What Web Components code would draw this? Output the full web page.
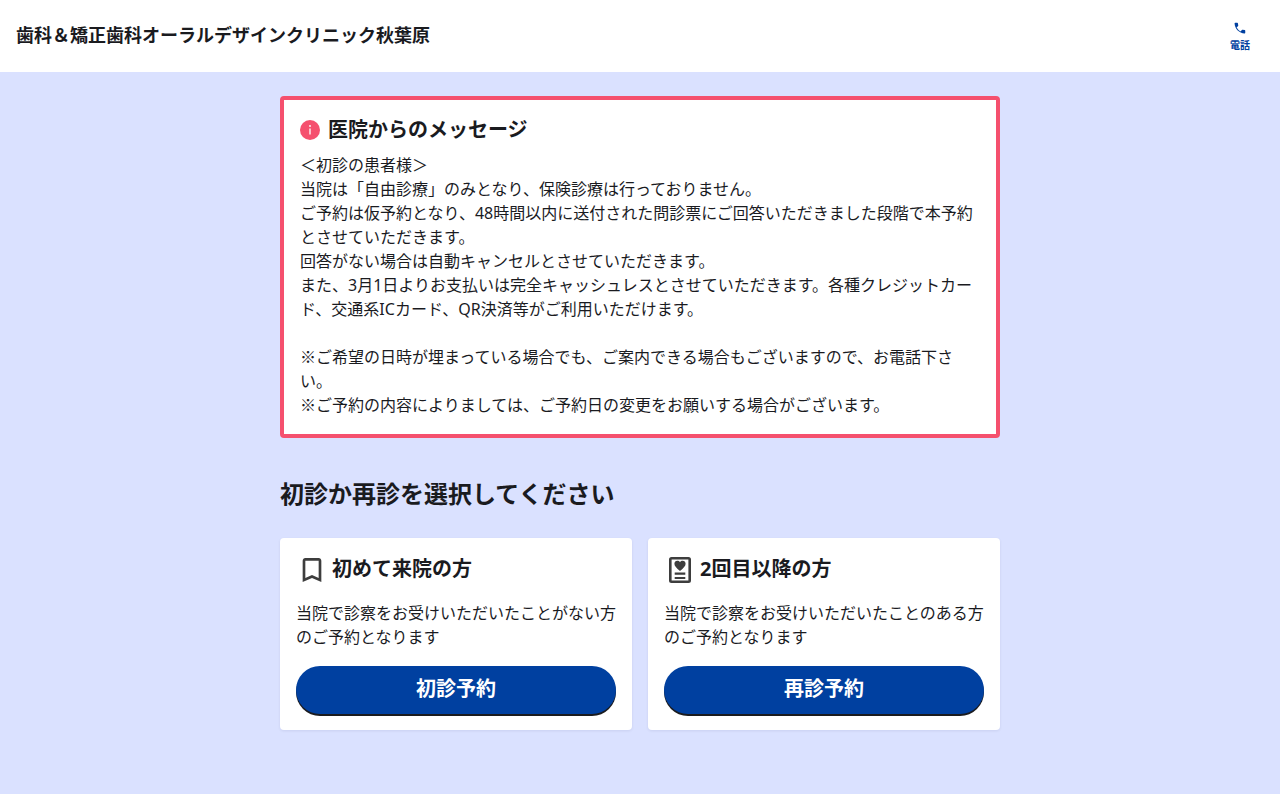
<!DOCTYPE html>
<html lang="ja">
<head>
<meta charset="utf-8">
<meta name="viewport" content="width=device-width, initial-scale=1">
<title>歯科＆矯正歯科オーラルデザインクリニック秋葉原</title>
<style>
  body {
    margin: 0;
    background: #fff;
    color: #1a1b1f;
    font-family: "Noto Sans", "Noto Sans CJK JP", sans-serif;
    font-size: 16px;
    line-height: 24px;
  }
  /* Keeps the reference marks full-width */
  .notes { display: block; margin-top: 24px; font-family: "Open Sans", "Noto Sans CJK JP", sans-serif; }
</style>
</head>
<body>
<clinic-header tel="0300000000">歯科＆矯正歯科オーラルデザインクリニック秋葉原</clinic-header>
<booking-main>
  <clinic-message>
    <span slot="title">医院からのメッセージ</span>＜初診の患者様＞<br>当院は「自由診療」のみとなり、保険診療は行っておりません。<br>ご予約は仮予約となり、48時間以内に送付された問診票にご回答いただきました段階で本予約とさせていただきます。<br>回答がない場合は自動キャンセルとさせていただきます。<br>また、3月1日よりお支払いは完全キャッシュレスとさせていただきます。各種クレジットカード、交通系ICカード、QR決済等がご利用いただけます。<span class="notes">※ご希望の日時が埋まっている場合でも、ご案内できる場合もございますので、お電話下さい。<br>※ご予約の内容によりましては、ご予約日の変更をお願いする場合がございます。</span></clinic-message>
  <visit-choices heading="初診か再診を選択してください">
    <visit-card action="初診予約">
      <svg slot="icon" width="32" height="32" viewBox="0 0 24 24" fill="#3d3d3d" aria-hidden="true"><path d="M17 3H7c-1.100 0-2 .9-2 2v16l7-3 7 3V5c0-1.100-.9-2-2-2zm0 15-5-2.180L7 18V5h10v13z"/></svg>
      <span slot="title">初めて来院の方</span>当院で診察をお受けいただいたことがない方のご予約となります</visit-card>
    <visit-card action="再診予約">
      <svg slot="icon" width="32" height="32" viewBox="0 0 32 32" aria-hidden="true"><rect x="6.300" y="4.200" width="19.400" height="23.600" rx="1.200" fill="none" stroke="#3d3d3d" stroke-width="2.600"/><path d="M16 17c-3.600-3-5.600-4.900-5.600-7.200 0-1.700 1.300-3 2.900-3 1.100 0 2.100.5 2.700 1.400.6-.9 1.600-1.400 2.700-1.400 1.600 0 2.900 1.300 2.900 3 0 2.300-2 4.200-5.600 7.200z" fill="#3d3d3d"/><path d="M10.700 19.700h10.600M10.700 24h10.600" stroke="#3d3d3d" stroke-width="2.200"/></svg>
      <span slot="title">2回目以降の方</span>当院で診察をお受けいただいたことのある方のご予約となります</visit-card>
  </visit-choices>
</booking-main>

<script>
const define = (name, markup, setup) => {
  const template = document.createElement('template');
  template.innerHTML = markup;
  customElements.define(name, class extends HTMLElement {
    constructor() {
      super();
      this.attachShadow({ mode: 'open' }).append(template.content.cloneNode(true));
    }
    connectedCallback() {
      if (setup) setup(this, this.shadowRoot);
    }
  });
};

define('clinic-header', `
  <style>
    :host { display: block; background: #fff; }
    header { display: flex; align-items: center; justify-content: space-between; min-height: 72px; padding: 0 16px; box-sizing: border-box; }
    h1 { margin: 0; padding-bottom: 2px; font-size: 18px; line-height: 28px; font-weight: 700; }
    a { display: flex; flex-direction: column; align-items: center; gap: 2px; width: 48px; padding-top: 2px; color: #0040a0; font-size: 10px; line-height: 16px; font-weight: 700; text-decoration: none; }
    svg { display: block; }
  </style>
  <header>
    <h1><slot></slot></h1>
    <a><svg width="14" height="14" viewBox="0 0 24 24" fill="currentColor" aria-hidden="true"><path d="M6.200 11.200l2.500-2.500c.3-.3.400-.8.300-1.200L8.400 3.900C8.300 3.400 7.900 3 7.300 3H3.700C3.100 3 2.600 3.500 2.700 4.100 3.300 13.300 10.700 20.700 19.900 21.300c.6.100 1.100-.4 1.100-1v-3.600c0-.6-.4-1-.9-1.100l-3.600-.6c-.4-.1-.9 0-1.200.3l-2.500 2.500a18 18 0 0 1-6.600-6.600z"/></svg>電話</a>
  </header>
`, (host, root) => { root.querySelector('a').href = 'tel:' + host.getAttribute('tel'); });

define('booking-main', `
  <style>
    :host { display: block; background: #dae1ff; }
    main { display: flex; flex-direction: column; gap: 38px; max-width: 720px; margin: 0 auto; padding: 24px 0 64px; }
  </style>
  <main><slot></slot></main>
`);

define('clinic-message', `
  <style>
    :host { display: block; box-sizing: border-box; padding: 15px 16px 17px; border: 4px solid #f5506e; border-radius: 4px; background: #fff; }
    header { display: flex; align-items: center; gap: 8px; margin-bottom: 8px; }
    svg { flex: none; }
    h2 { margin: 0; font-size: 20px; line-height: 30px; font-weight: 700; }
    p { margin: 0; }
  </style>
  <header>
    <svg width="20" height="20" viewBox="0 0 20 20" aria-hidden="true"><circle cx="10" cy="10" r="10" fill="#f5506e"/><path d="M10 8.500v6" stroke="#fff" stroke-width="1.300"/><circle cx="10" cy="6" r=".9" fill="#fff"/></svg>
    <h2><slot name="title"></slot></h2>
  </header>
  <p><slot></slot></p>
`);

define('visit-choices', `
  <style>
    :host { display: block; }
    h2 { margin: 0 0 26px; font-size: 24px; line-height: 36px; font-weight: 700; }
    div { display: grid; grid-template-columns: repeat(auto-fit, minmax(300px, 1fr)); gap: 16px; }
  </style>
  <section><h2></h2><div><slot></slot></div></section>
`, (host, root) => { root.querySelector('h2').textContent = host.getAttribute('heading'); });

define('visit-card', `
  <style>
    :host { display: flex; flex-direction: column; padding: 16px; border-radius: 4px; background: #fff; box-shadow: 0 1px 3px rgba(0, 0, 60, .08); }
    header { display: flex; gap: 4px; margin-bottom: 15px; }
    h3 { margin: 0; font-size: 20px; line-height: 30px; font-weight: 700; }
    p { margin: 0 0 17px; flex: 1; }
    button { height: 48px; padding: 0 16px 2px; border: 0; border-radius: 24px; background: #0040a0; color: #fff; font: inherit; font-size: 20px; line-height: 30px; font-weight: 700; box-shadow: 0 2px 0 #1a1b1f; cursor: pointer; }
  </style>
  <header><slot name="icon"></slot><h3><slot name="title"></slot></h3></header>
  <p><slot></slot></p>
  <button type="button"></button>
`, (host, root) => { root.querySelector('button').textContent = host.getAttribute('action'); });
</script>
</body>
</html>
